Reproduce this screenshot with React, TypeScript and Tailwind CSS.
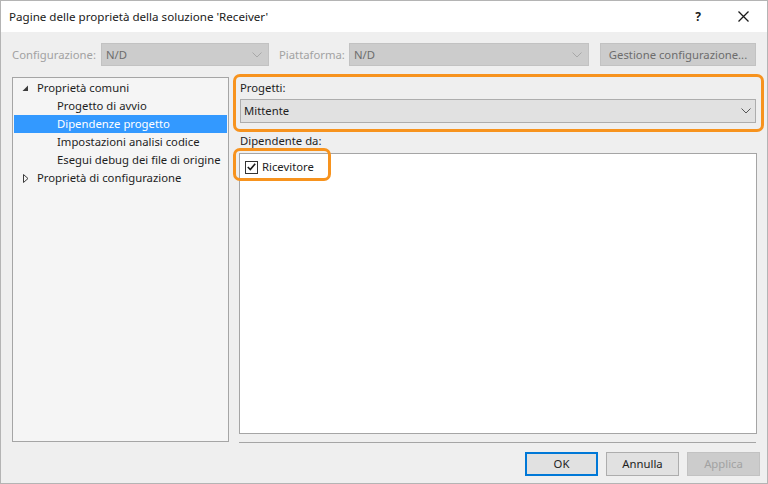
import React from 'react';

const font = { fontFamily: '"Noto Sans", "Segoe UI", sans-serif' };

function Chevron({ color = '#8a8a8a' }: { color?: string }) {
  return (
    <svg width="10" height="6" viewBox="0 0 10 6" className="shrink-0">
      <path d="M0.5 0.5 L5 5 L9.5 0.5" fill="none" stroke={color} strokeWidth="1" />
    </svg>
  );
}

function TreeRow({
  label,
  indent,
  selected,
  arrow,
}: {
  label: string;
  indent: boolean;
  selected?: boolean;
  arrow?: 'open' | 'closed';
}) {
  return (
    <div
      className={`h-[18px] flex items-center whitespace-nowrap ${
        selected ? 'bg-[#3399ff] text-white' : 'text-[#1e1e1e]'
      }`}
    >
      <div className="w-[23px] shrink-0 flex justify-end pr-[8px]">
        {arrow === 'open' && (
          <svg width="7" height="7" viewBox="0 0 7 7">
            <path d="M6 0.5 L6 6 L0.5 6 Z" fill="#3c3c3c" />
          </svg>
        )}
        {arrow === 'closed' && (
          <svg width="6" height="9" viewBox="0 0 6 9">
            <path d="M0.5 0.5 L5 4.5 L0.5 8.5 Z" fill="none" stroke="#3c3c3c" strokeWidth="1" />
          </svg>
        )}
      </div>
      <span className={indent ? 'pl-[20px]' : ''}>{label}</span>
    </div>
  );
}

export default function App() {
  return (
    <div
      className="w-[768px] h-[484px] flex flex-col border border-[#b4b4b4] bg-[#efefef] text-[11.3px] leading-none overflow-hidden"
      style={font}
    >
      {/* Title bar */}
      <div className="h-[31px] bg-white flex items-center pl-[8px] text-[#1a1a1a] shrink-0">
        <span className="flex-1 text-[11.6px]">Pagine delle proprietà della soluzione 'Receiver'</span>
        <span className="font-bold text-[12px] mr-[37px]">?</span>
        <svg width="11" height="11" viewBox="0 0 11 11" className="mr-[18px]">
          <path d="M0.5 0.5 L10.5 10.5 M10.5 0.5 L0.5 10.5" stroke="#1a1a1a" strokeWidth="1.3" />
        </svg>
      </div>

      {/* Configuration row */}
      <div className="flex items-center h-[23px] mt-[11px] pl-[11px] shrink-0">
        <span className="text-[#a2a2a2] w-[89px] whitespace-nowrap">Configurazione:</span>
        <div className="w-[168px] h-[23px] bg-[#cccccc] border border-[#c2c2c2] flex items-center pl-[4px] pr-[6px]">
          <span className="flex-1 text-[#6d6d6d]">N/D</span>
          <Chevron color="#a8a8a8" />
        </div>
        <span className="text-[#a2a2a2] ml-[10px] w-[70px] whitespace-nowrap">Piattaforma:</span>
        <div className="w-[240px] h-[23px] bg-[#cccccc] border border-[#c2c2c2] flex items-center pl-[4px] pr-[6px]">
          <span className="flex-1 text-[#6d6d6d]">N/D</span>
          <Chevron color="#a8a8a8" />
        </div>
        <div className="ml-[11px] w-[156px] h-[23px] bg-[#cccccc] border border-[#c2c2c2] flex items-center justify-center text-[#6d6d6d] whitespace-nowrap">
          Gestione configurazione...
        </div>
      </div>

      {/* Main area */}
      <div className="flex mt-[8px] pl-[11px] shrink-0">
        {/* Tree */}
        <div className="w-[217px] h-[365px] mt-[3px] bg-[#f5f5f5] border border-[#a5a5a5] pt-[1px] px-[1px]">
          <TreeRow label="Proprietà comuni" indent={false} arrow="open" />
          <TreeRow label="Progetto di avvio" indent />
          <TreeRow label="Dipendenze progetto" indent selected />
          <TreeRow label="Impostazioni analisi codice" indent />
          <TreeRow label="Esegui debug dei file di origine" indent />
          <TreeRow label="Proprietà di configurazione" indent={false} arrow="closed" />
        </div>

        {/* Right column */}
        <div className="ml-[4px] w-[531px] flex flex-col">
          <div className="h-[58px] border-[3px] border-[#f7931e] rounded-[7px] pl-[4px] pr-[5px] pt-[2px]">
            <div className="h-[18px] flex items-center text-[#1e1e1e]">Progetti:</div>
            <div className="h-[24px] mt-[2px] bg-[#e1e1e1] border border-[#adadad] flex items-center pl-[3px] pr-[4px] text-[#1e1e1e]">
              <span className="flex-1">Mittente</span>
              <Chevron color="#555555" />
            </div>
          </div>
          <div className="h-[18px] pl-[7px] flex items-center text-[#1e1e1e]">Dipendente da:</div>
          <div className="relative ml-[6px] mr-[7px] h-[281px] mt-[3px] bg-white border border-[#a5a5a5]">
            <div className="absolute left-[-7px] top-[-6px] w-[98px] h-[33px] border-[3px] border-[#f7931e] rounded-[7px]" />
            <div className="flex items-center h-[20px] mt-[3px] pl-[5px] text-[#1e1e1e]">
              <div className="w-[13px] h-[13px] border border-[#333333] bg-white flex items-center justify-center">
                <svg width="9" height="8" viewBox="0 0 9 8">
                  <path d="M0.8 4 L3.3 6.5 L8.2 0.8" fill="none" stroke="#1a1a1a" strokeWidth="1.6" />
                </svg>
              </div>
              <span className="ml-[4px]">Ricevitore</span>
            </div>
          </div>
          <div className="ml-[6px] mr-[8px] mt-[8px] h-px bg-[#a5a5a5]" />
        </div>
      </div>

      {/* Buttons */}
      <div className="flex justify-end gap-[8px] mt-[9px] pr-[7px]">
        <div className="w-[73px] h-[24px] bg-[#e1e1e1] border-2 border-[#0078d7] flex items-center justify-center text-[#1e1e1e]">
          OK
        </div>
        <div className="w-[73px] h-[24px] bg-[#e1e1e1] border border-[#adadad] flex items-center justify-center text-[#1e1e1e]">
          Annulla
        </div>
        <div className="w-[73px] h-[24px] bg-[#cccccc] border border-[#c2c2c2] flex items-center justify-center text-[#a2a2a2]">
          Applica
        </div>
      </div>
    </div>
  );
}
